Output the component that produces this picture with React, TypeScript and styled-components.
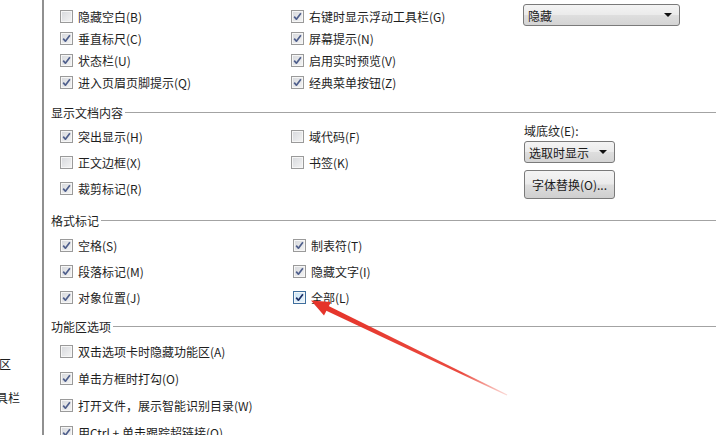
import React from 'react'
import styled, { createGlobalStyle } from 'styled-components'

const GlobalStyle = createGlobalStyle`
  html, body {
    margin: 0;
    padding: 0;
    background: #fff;
  }
  body {
    width: 716px;
    height: 435px;
    overflow: hidden;
    font-family: "Noto Sans CJK SC", "Liberation Sans", sans-serif;
    font-size: 12px;
    color: #1e1e1e;
  }
`

type Item = { label: string; checked?: boolean; hot?: boolean }

const viewItems: Item[][] = [
  [{ label: '隐藏空白(B)' }, { label: '右键时显示浮动工具栏(G)', checked: true }],
  [{ label: '垂直标尺(C)', checked: true }, { label: '屏幕提示(N)', checked: true }],
  [{ label: '状态栏(U)', checked: true }, { label: '启用实时预览(V)', checked: true }],
  [{ label: '进入页眉页脚提示(Q)', checked: true }, { label: '经典菜单按钮(Z)', checked: true }],
]

const contentItems: Item[][] = [
  [{ label: '突出显示(H)', checked: true }, { label: '域代码(F)' }],
  [{ label: '正文边框(X)' }, { label: '书签(K)' }],
  [{ label: '裁剪标记(R)', checked: true }],
]

const markItems: Item[][] = [
  [{ label: '空格(S)', checked: true }, { label: '制表符(T)', checked: true }],
  [{ label: '段落标记(M)', checked: true }, { label: '隐藏文字(I)', checked: true }],
  [{ label: '对象位置(J)', checked: true }, { label: '全部(L)', checked: true, hot: true }],
]

const ribbonItems: Item[] = [
  { label: '双击选项卡时隐藏功能区(A)' },
  { label: '单击方框时打勾(O)', checked: true },
  { label: '打开文件，展示智能识别目录(W)', checked: true },
  { label: '用Ctrl + 单击跟踪超链接(O)', checked: true },
]

function CheckBox({ checked, hot }: { checked?: boolean; hot?: boolean }) {
  return (
    <Box $hot={hot}>
      {checked && (
        <svg width="11" height="11" viewBox="0 0 11 11">
          <path
            d="M2.2 5.6 L4.4 8.2 L8.9 2.2"
            fill="none"
            stroke={hot ? '#1b2f66' : '#4f5f8c'}
            strokeWidth="1.7"
            strokeLinejoin="round"
          />
        </svg>
      )}
    </Box>
  )
}

function Option({ item }: { item: Item }) {
  return (
    <OptionRow>
      <CheckBox checked={item.checked} hot={item.hot} />
      <span>{item.label}</span>
    </OptionRow>
  )
}

export default function App() {
  return (
    <>
      <GlobalStyle />
      <Page>
        <Sidebar>
          <NavItem $shift={-61}>自定义功能区</NavItem>
          <NavItem $shift={-64}>快速访问工具栏</NavItem>
        </Sidebar>
        <Main>
          <Grid $pad={5} $row={22} $cols="231px 232px 1fr">
            {viewItems.map((row, i) => (
              <React.Fragment key={i}>
                {row.map((it) => (
                  <Option key={it.label} item={it} />
                ))}
                {i === 0 ? (
                  <Select $width={157}>
                    <span>隐藏</span>
                    <Caret />
                  </Select>
                ) : (
                  <span />
                )}
              </React.Fragment>
            ))}
          </Grid>

          <Header $top={11}>显示文档内容</Header>
          <Grid $pad={3} $row={26} $cols="231px 232px 1fr">
            {contentItems.map((row, i) => (
              <React.Fragment key={i}>
                {row.map((it) => (
                  <Option key={it.label} item={it} />
                ))}
              </React.Fragment>
            ))}
            <SideBlock>
              <FieldLabel>域底纹(E):</FieldLabel>
              <Select $width={91}>
                <span>选取时显示</span>
                <Caret />
              </Select>
              <PushButton>字体替换(O)...</PushButton>
            </SideBlock>
          </Grid>

          <Header $top={11}>格式标记</Header>
          <Grid $pad={4} $row={26} $cols="233px 1fr">
            {markItems.map((row, i) => (
              <React.Fragment key={i}>
                {row.map((it) => (
                  <Option key={it.label} item={it} />
                ))}
              </React.Fragment>
            ))}
          </Grid>

          <Header $top={8}>功能区选项</Header>
          <Grid $pad={4} $row={27} $cols="1fr">
            {ribbonItems.map((it) => (
              <Option key={it.label} item={it} />
            ))}
          </Grid>
        </Main>

        <Overlay viewBox="0 0 716 435" width="716" height="435">
          <defs>
            <linearGradient id="tail" x1="507" y1="395" x2="325" y2="308" gradientUnits="userSpaceOnUse">
              <stop offset="0" stopColor="#ec4a3a" stopOpacity="0.2" />
              <stop offset="0.25" stopColor="#e8372b" stopOpacity="0.9" />
              <stop offset="1" stopColor="#e5342a" />
            </linearGradient>
          </defs>
          <polygon points="507.3,394.6 506.7,395.4 325.8,310.6 327.6,305.4" fill="url(#tail)" />
          <polygon points="311,300.5 331,302 324,315.5" fill="#e5342a" />
        </Overlay>
      </Page>
    </>
  )
}

const Page = styled.div`
  position: relative;
  display: flex;
  width: 716px;
  height: 435px;
  overflow: hidden;
  background: #fff;
`

const Sidebar = styled.div`
  width: 44px;
  flex-shrink: 0;
  display: flex;
  flex-direction: column;
  justify-content: flex-end;
  padding-bottom: 20px;
  box-sizing: border-box;
  border-right: 2px solid #909090;
  overflow: hidden;
`

const NavItem = styled.div<{ $shift: number }>`
  height: 34px;
  line-height: 34px;
  white-space: nowrap;
  margin-left: ${(p) => p.$shift}px;
  font-size: 12px;
  color: #1e1e1e;
`

const Main = styled.div`
  flex: 1;
  display: flex;
  flex-direction: column;
`

const Header = styled.div<{ $top: number }>`
  display: flex;
  align-items: center;
  gap: 2px;
  height: 16px;
  margin-top: ${(p) => p.$top}px;
  padding-left: 7px;
  white-space: nowrap;
  color: #1e1e1e;

  &::after {
    content: '';
    flex: 1;
    border-top: 1px solid #a3a3a3;
  }
`

const Grid = styled.div<{ $pad: number; $row: number; $cols: string }>`
  display: grid;
  grid-template-columns: ${(p) => p.$cols};
  grid-auto-rows: ${(p) => p.$row}px;
  padding-top: ${(p) => p.$pad}px;
  padding-left: 16px;
`

const OptionRow = styled.label`
  display: flex;
  align-items: center;
  gap: 5px;
  white-space: nowrap;
  color: #1e1e1e;
`

const Box = styled.span<{ $hot?: boolean }>`
  width: 13px;
  height: 13px;
  box-sizing: border-box;
  flex-shrink: 0;
  display: flex;
  align-items: center;
  justify-content: center;
  border: 1px solid ${(p) => (p.$hot ? '#3f6f9e' : '#9a9a9a')};
  background: ${(p) =>
    p.$hot
      ? 'linear-gradient(135deg, #c9e4f6 0%, #e9f5fd 100%)'
      : 'linear-gradient(135deg, #d6d8dc 0%, #f4f4f4 100%)'};
  box-shadow: inset 0 0 0 1px #f6f6f6;
`

const Select = styled.div<{ $width: number }>`
  display: flex;
  align-items: center;
  justify-content: space-between;
  width: ${(p) => p.$width}px;
  height: 22px;
  margin-top: -1px;
  padding: 0 7px 0 4px;
  box-sizing: border-box;
  border: 1px solid #7a7a7a;
  border-radius: 3px;
  background: linear-gradient(#f4f4f4 0%, #ebebeb 48%, #dedede 52%, #d4d4d4 100%);
  color: #1a1a1a;
  white-space: nowrap;
`

const Caret = styled.span`
  width: 0;
  height: 0;
  border-left: 4px solid transparent;
  border-right: 4px solid transparent;
  border-top: 4px solid #111;
`

const SideBlock = styled.div`
  grid-column: 3;
  grid-row: 1 / span 3;
  display: flex;
  flex-direction: column;
  padding-left: 1px;
`

const FieldLabel = styled.div`
  height: 16px;
  line-height: 16px;
  margin-bottom: 3px;
  white-space: nowrap;
`

const PushButton = styled.button`
  width: 91px;
  height: 29px;
  margin-top: 7px;
  padding: 0;
  border: 1px solid #7a7a7a;
  border-radius: 3px;
  background: linear-gradient(#f4f4f4 0%, #ebebeb 48%, #dddddd 52%, #cfcfcf 100%);
  font-family: inherit;
  font-size: 12px;
  color: #1a1a1a;
`

const Overlay = styled.svg`
  position: absolute;
  left: 0;
  top: 0;
  pointer-events: none;
`
